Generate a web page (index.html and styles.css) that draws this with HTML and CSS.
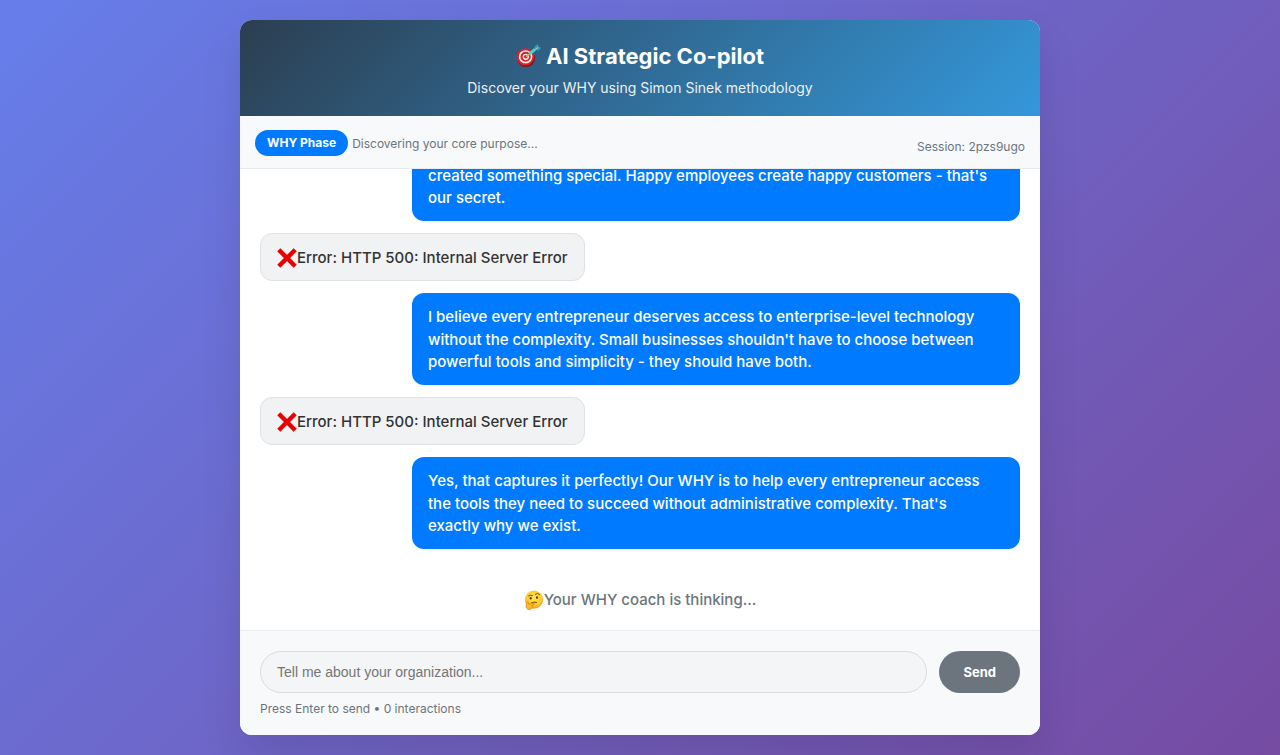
FILE: index.html
```html
<!DOCTYPE html>
<html lang="en">
<head>
<meta charset="utf-8">
<meta name="viewport" content="width=device-width, initial-scale=1">
<title>AI Strategic Co-pilot</title>
<link rel="stylesheet" href="styles.css">
</head>
<body>
<svg class="defs" aria-hidden="true">
  <defs>
    <symbol id="cross" viewBox="0 0 20 20">
      <path d="M1.800 1.800 18.200 18.200M18.200 1.800 1.800 18.200" stroke="#e90000" stroke-width="4.400" fill="none"/>
    </symbol>
  </defs>
</svg>
<main class="app">
  <header class="header">
    <h1 class="title">
      <svg class="title-icon" viewBox="0 0 26 24" aria-hidden="true">
        <ellipse cx="10" cy="14.2" rx="9" ry="8.8" fill="#8e1014"/>
        <ellipse cx="9.4" cy="12.8" rx="8.9" ry="8.6" fill="#d8232a"/>
        <ellipse cx="9.6" cy="12.8" rx="6" ry="5.8" fill="none" stroke="#f4eeee" stroke-width="1.700"/>
        <ellipse cx="9.8" cy="12.8" rx="2.5" ry="2.4" fill="#d8232a" stroke="#f4eeee" stroke-width="1.400"/>
        <path d="M10 12.6 15 8.8" stroke="#d9a94a" stroke-width="1.5"/>
        <path d="m13.6 9.9 5.4-4.6" stroke="#4fd0d0" stroke-width="3"/>
        <path d="m18 6.1 1-4 3.2-1.9.1 3.1 3 .3-2.5 2.8z" fill="#369fae"/>
        <path d="m18.4 5.8 4-2.5" stroke="#84e4e1" stroke-width="1"/>
      </svg>
      <span>AI Strategic Co-pilot</span>
    </h1>
    <p class="subtitle">Discover your WHY using Simon Sinek methodology</p>
  </header>
  <section class="status">
    <span class="phase">WHY Phase</span>
    <span class="phase-text">Discovering your core purpose...</span>
    <span class="session">Session: 2pzs9ugo</span>
  </section>
  <section class="messages" aria-label="Conversation">
    <div class="thread">
      <p class="bubble user">created something special. Happy employees create happy customers - that's our secret.</p>
      <p class="bubble reply"><svg class="emoji" aria-hidden="true"><use href="#cross"/></svg><span>Error: HTTP 500: Internal Server Error</span></p>
      <p class="bubble user">I believe every entrepreneur deserves access to enterprise-level technology without the complexity. Small businesses shouldn't have to choose between powerful tools and simplicity - they should have both.</p>
      <p class="bubble reply"><svg class="emoji" aria-hidden="true"><use href="#cross"/></svg><span>Error: HTTP 500: Internal Server Error</span></p>
      <p class="bubble user">Yes, that captures it perfectly! Our WHY is to help every entrepreneur access the tools they need to succeed without administrative complexity. That's exactly why we exist.</p>
      <p class="thinking">
        <svg class="emoji" viewBox="0 0 20 20" aria-hidden="true">
          <defs>
            <radialGradient id="face" cx=".5" cy=".4" r=".6">
              <stop offset="0" stop-color="#ffe54d"/>
              <stop offset=".7" stop-color="#fdc92f"/>
              <stop offset="1" stop-color="#f09a1c"/>
            </radialGradient>
          </defs>
          <circle cx="10" cy="9.6" r="9.1" fill="url(#face)"/>
          <path d="M4.6 5.9q2-1.3 3.8-.4M11.4 4.2q2.200-1.800 4.200.2" stroke="#7a4a12" stroke-width="1" fill="none" stroke-linecap="round"/>
          <ellipse cx="6.700" cy="8.200" rx="1" ry="1.300" fill="#57320c"/>
          <ellipse cx="13" cy="7.600" rx="1" ry="1.300" fill="#57320c"/>
          <path d="M7.400 12.900q2.600-1.500 5.200-.6" stroke="#7a4a12" stroke-width="1" fill="none" stroke-linecap="round"/>
          <path d="M2.600 12.500c.4-1.200 1.700-1.100 1.800.1l.3 1.500 4.700-1c1.500-.2 1.800 1.200.5 1.600l-2.400.8c1.400.1 1.500 1.500.6 2.100-.2 1.400-1.600 2-3.100 1.900-2.200-.1-3.300-2.200-2.900-4.200z" fill="#fbb829" stroke="#d98312" stroke-width=".7"/>
        </svg><span>Your WHY coach is thinking...</span>
      </p>
    </div>
  </section>
  <form class="composer">
    <div class="row">
      <input class="field" type="text" aria-label="Your message" placeholder="Tell me about your organization...">
      <button class="send" type="button">Send</button>
    </div>
    <p class="hint">Press Enter to send • 0 interactions</p>
  </form>
</main>
</body>
</html>
```
FILE: styles.css
```css
* {
  box-sizing: border-box;
}

body {
  margin: 0;
  min-height: 100vh;
  padding: 20px;
  background: linear-gradient(135deg, #667eea 0%, #764ba2 100%);
  font-family: Inter, "Liberation Sans", sans-serif;
  color: #333;
}

h1,
p {
  margin: 0;
}

.defs {
  position: absolute;
  width: 0;
  height: 0;
}

.app {
  display: flex;
  flex-direction: column;
  max-width: 800px;
  height: calc(100vh - 40px);
  margin: 0 auto;
  overflow: hidden;
  border-radius: 12px;
  background: #fff;
  box-shadow: 0 20px 40px rgba(0, 0, 0, 0.1);
}

.header {
  padding: 20px;
  background: linear-gradient(135deg, #2c3e50 0%, #3498db 100%);
  color: #fff;
  text-align: center;
}

.title {
  display: flex;
  align-items: center;
  justify-content: center;
  gap: 4px;
  margin-bottom: 7px;
  font-size: 22px;
  font-weight: 700;
  line-height: 32px;
}

.title-icon {
  width: 26px;
  height: 24px;
}

.subtitle {
  font-size: 14px;
  line-height: 17px;
  opacity: 0.9;
}

.status {
  display: flex;
  align-items: center;
  gap: 4px;
  padding: 14px 15px 12px;
  border-bottom: 1px solid #e9ecef;
  background: #f8f9fb;
  color: #6c757d;
  font-size: 12px;
}

.phase {
  padding: 4px 12px;
  border-radius: 20px;
  background: #007bff;
  color: #fff;
  font-weight: 700;
  line-height: 18px;
}

.session {
  align-self: flex-end;
  margin-left: auto;
  line-height: 18px;
}

.messages {
  display: flex;
  flex: 1;
  flex-direction: column-reverse;
  min-height: 0;
  overflow-y: auto;
  scrollbar-width: none;
}

.thread {
  display: flex;
  flex-direction: column;
  gap: 12px;
  padding: 20px 20px 19px;
  font-size: 15px;
  font-weight: 500;
  line-height: 1.5;
}

.bubble {
  max-width: 80%;
  border-radius: 12px;
}

.user {
  align-self: flex-end;
  padding: 13px 24px 11px 16px;
  background: #007bff;
  color: #fff;
}

.reply {
  display: flex;
  align-self: flex-start;
  align-items: center;
  padding: 13px 16px 11px;
  border: 1px solid #dee2e6;
  background: #f1f2f4;
}

.emoji {
  flex: none;
  width: 20px;
  height: 20px;
}

.thinking {
  display: flex;
  align-items: center;
  justify-content: center;
  padding-top: 28px;
  color: #6c757d;
}

.composer {
  padding: 20px 20px 18px;
  border-top: 1px solid #e9ecef;
  background: #f8f9fb;
}

.row {
  display: flex;
  gap: 12px;
}

.field {
  flex: 1;
  min-width: 0;
  height: 42px;
  padding: 0 16px;
  border: 1px solid #dadcdf;
  border-radius: 21px;
  background: #f4f5f7;
  font-family: "Liberation Sans", Arial, sans-serif;
  font-size: 14px;
}

.field::placeholder {
  color: #757575;
}

.send {
  padding: 0 24px;
  border: 0;
  border-radius: 21px;
  background: #6c757d;
  color: #fff;
  font-family: Inter, "Liberation Sans", sans-serif;
  font-size: 13px;
  font-weight: 700;
}

.hint {
  margin-top: 8px;
  color: #6c757d;
  font-size: 12px;
  line-height: 16px;
}
```
